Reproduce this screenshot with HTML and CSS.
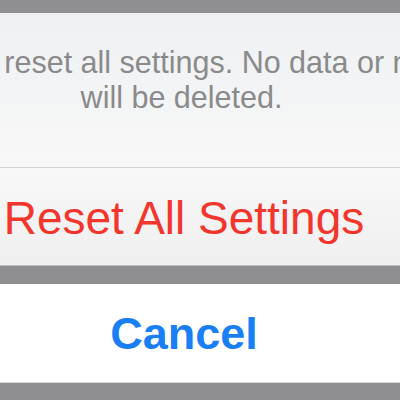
FILE: index.html
```html
<!DOCTYPE html>
<html lang="en">
<head>
    <meta charset="UTF-8">
    <meta name="viewport" content="width=device-width, initial-scale=1.0">
    <title>Reset All Settings</title>
    <link rel="stylesheet" href="styles.css">
</head>
<body>
    <div class="sheet">
        <div class="group">
            <div class="message">This will reset all settings. No data or media<br>will be deleted.</div>
            <div class="action destructive">Reset All Settings</div>
        </div>
        <div class="group cancel-group">
            <div class="action cancel">Cancel</div>
        </div>
    </div>
</body>
</html>
```

FILE: styles.css
```css
html, body {
    margin: 0;
    height: 100%;
    overflow: hidden;
}
body {
    background-color: #8f8f91;
    font-family: "Liberation Sans", Arial, sans-serif;
}
.sheet {
    width: 800px;
    margin-left: -216px;
    padding-top: 13px;
}
.group {
    background: #f6f6f6;
}
.message {
    height: 122px;
    padding-top: 32px;
    padding-right: 5px;
    text-align: center;
    white-space: nowrap;
    font-size: 30.5px;
    line-height: 35px;
    color: #8a8a8a;
    background: linear-gradient(#eef0f2, #f8f8f8);
    border-bottom: 1px solid #d2d2d2;
}
.action {
    text-align: center;
    white-space: nowrap;
}
.destructive {
    height: 97px;
    line-height: 101px;
    font-size: 46px;
    color: #f2362e;
    background: linear-gradient(#f8f8f8, #efefef);
    border-bottom: 1px solid #bdbdbd;
}
.cancel-group {
    margin-top: 18px;
    background: #ffffff;
}
.cancel {
    height: 98px;
    line-height: 100px;
    font-size: 45px;
    font-weight: bold;
    color: #1a7ff5;
    border-bottom: 1px solid #d8d8d8;
}
```
